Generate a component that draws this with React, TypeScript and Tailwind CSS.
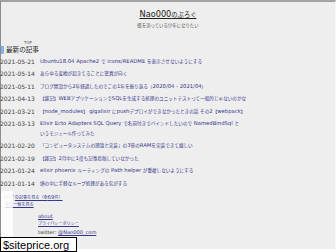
const posts: { date: string; title: string; more?: string }[] = [
  { date: "2021-05-21", title: "Ubuntu18.04 Apache2 で icons/README を表示させないようにする" },
  { date: "2021-05-14", title: "あらゆる変換が起きてることに驚異が向く" },
  { date: "2021-05-11", title: "ブログ開設から2年経過したのでこの1年を振り返る（2020/04 - 2021/04）" },
  { date: "2021-04-13", title: "【雑記】WEBアプリケーションでSQLを生成する処理のユニットテストって一般的じゃないのかな" },
  { date: "2021-03-21", title: "【node_modules】 gigalixir にpushデプロイができなかったときの話 その2【webpack】" },
  {
    date: "2021-03-13",
    title: "Elixir Ecto Adapters SQL Query で名前付きでバインドしたいので NamedBindSql と",
    more: "いうモジュール作ってみた",
  },
  { date: "2021-02-20", title: "「コンピュータシステムの理論と実装」の3章のRAMを実装できて嬉しい" },
  { date: "2021-02-19", title: "【雑記】2月中に1度も記事投稿していなかった" },
  { date: "2021-01-24", title: "elixir phoenix ルーティングの Path helper が重複しないようにする" },
  { date: "2021-01-14", title: "頭の中に手軽なループ処理がある気がする" },
];

const font = { fontFamily: '"DejaVu Sans", "Noto Sans CJK JP", sans-serif' };

// latin runs are drawn a little larger than the japanese ones, like the original page
function Mixed({ text, latin = "text-[1.3em]" }: { text: string; latin?: string }) {
  const parts = text.split(/([\x20-\x7E]+)/);
  return (
    <>
      {parts.map((t, i) =>
        i % 2 === 1 ? (
          <span key={i} className={latin + " leading-[0]"}>
            {t}
          </span>
        ) : (
          t
        )
      )}
    </>
  );
}

export default function App() {
  return (
    <div className="relative w-[336px] h-[252px] overflow-hidden bg-white" style={font}>
      <div className="h-[249px] bg-[#eeeeee] border-t-2 border-t-[#a3a3a3] border-l border-l-[#8c8c8c] border-r border-r-[#f7f7f7]">
        <header className="pt-[8px] flex flex-col items-center">
          <a className="text-[6.3px] leading-[10px] text-[#222] underline">
            <Mixed text="Nao000のぶろぐ" />
          </a>
          <p className="mt-[3px] text-[4.4px] leading-[6px] text-[#555]">蝶を追っている少年になりたい</p>
        </header>

        <div className="mt-[10.5px] pl-[23px] text-[4px] leading-[5px] text-[#555]">TOP</div>

        <div className="mt-[1px] h-[9px] flex items-center gap-[2px]">
          <span className="w-[3px] h-[8px] bg-[#86b4e2]"></span>
          <h2 className="text-[6.6px] leading-[9px] text-[#222]">最新の記事</h2>
        </div>

        <ul className="mt-[2.5px] flex flex-col gap-[2.4px] -ml-[1px]">
          {posts.map((p) => (
            <li key={p.date} className="flex leading-[10px]">
              <span className="w-[40px] shrink-0 text-[6px] text-[#444]">{p.date}</span>
              <a className="w-[290px] whitespace-nowrap overflow-hidden text-[4.6px] text-[#36368c]">
                <Mixed text={p.title} latin="text-[1.15em]" />
                {p.more && (
                  <>
                    <br />
                    {p.more}
                  </>
                )}
              </a>
            </li>
          ))}
        </ul>

        <div className="mt-[5px] text-[4.1px] text-[#36368c]">
          <div className="pl-[2px] leading-[7px]">
            <span className="text-[#777]">すべて</span>
            <a className="underline">
              <Mixed text="の記事を見る（全69件）" />
            </a>
          </div>
          <div className="pl-[4px] leading-[8px]">
            <a className="underline">タグ一覧を見る</a>
          </div>
          <div className="mt-[3px] pl-[37px] flex flex-col items-start leading-[8px]">
            <a className="underline text-[5.1px]">about</a>
            <a className="underline">プライバシーポリシー</a>
            <span className="text-[5.1px] text-[#444]">
              twitter: <a className="underline text-[#36368c]">@Nao000_com</a>
            </span>
          </div>
        </div>
      </div>

      <div className="absolute left-[1px] top-[191px] w-[12px] h-[46px] bg-white/80"></div>
      <div className="absolute left-0 top-[237px] w-[77px] h-[15px] bg-white border border-black flex items-center pl-[2px]">
        <span className="text-[11px] leading-[12px] text-black" style={{ fontFamily: '"Liberation Sans", sans-serif' }}>
          $siteprice.org
        </span>
      </div>
    </div>
  );
}
